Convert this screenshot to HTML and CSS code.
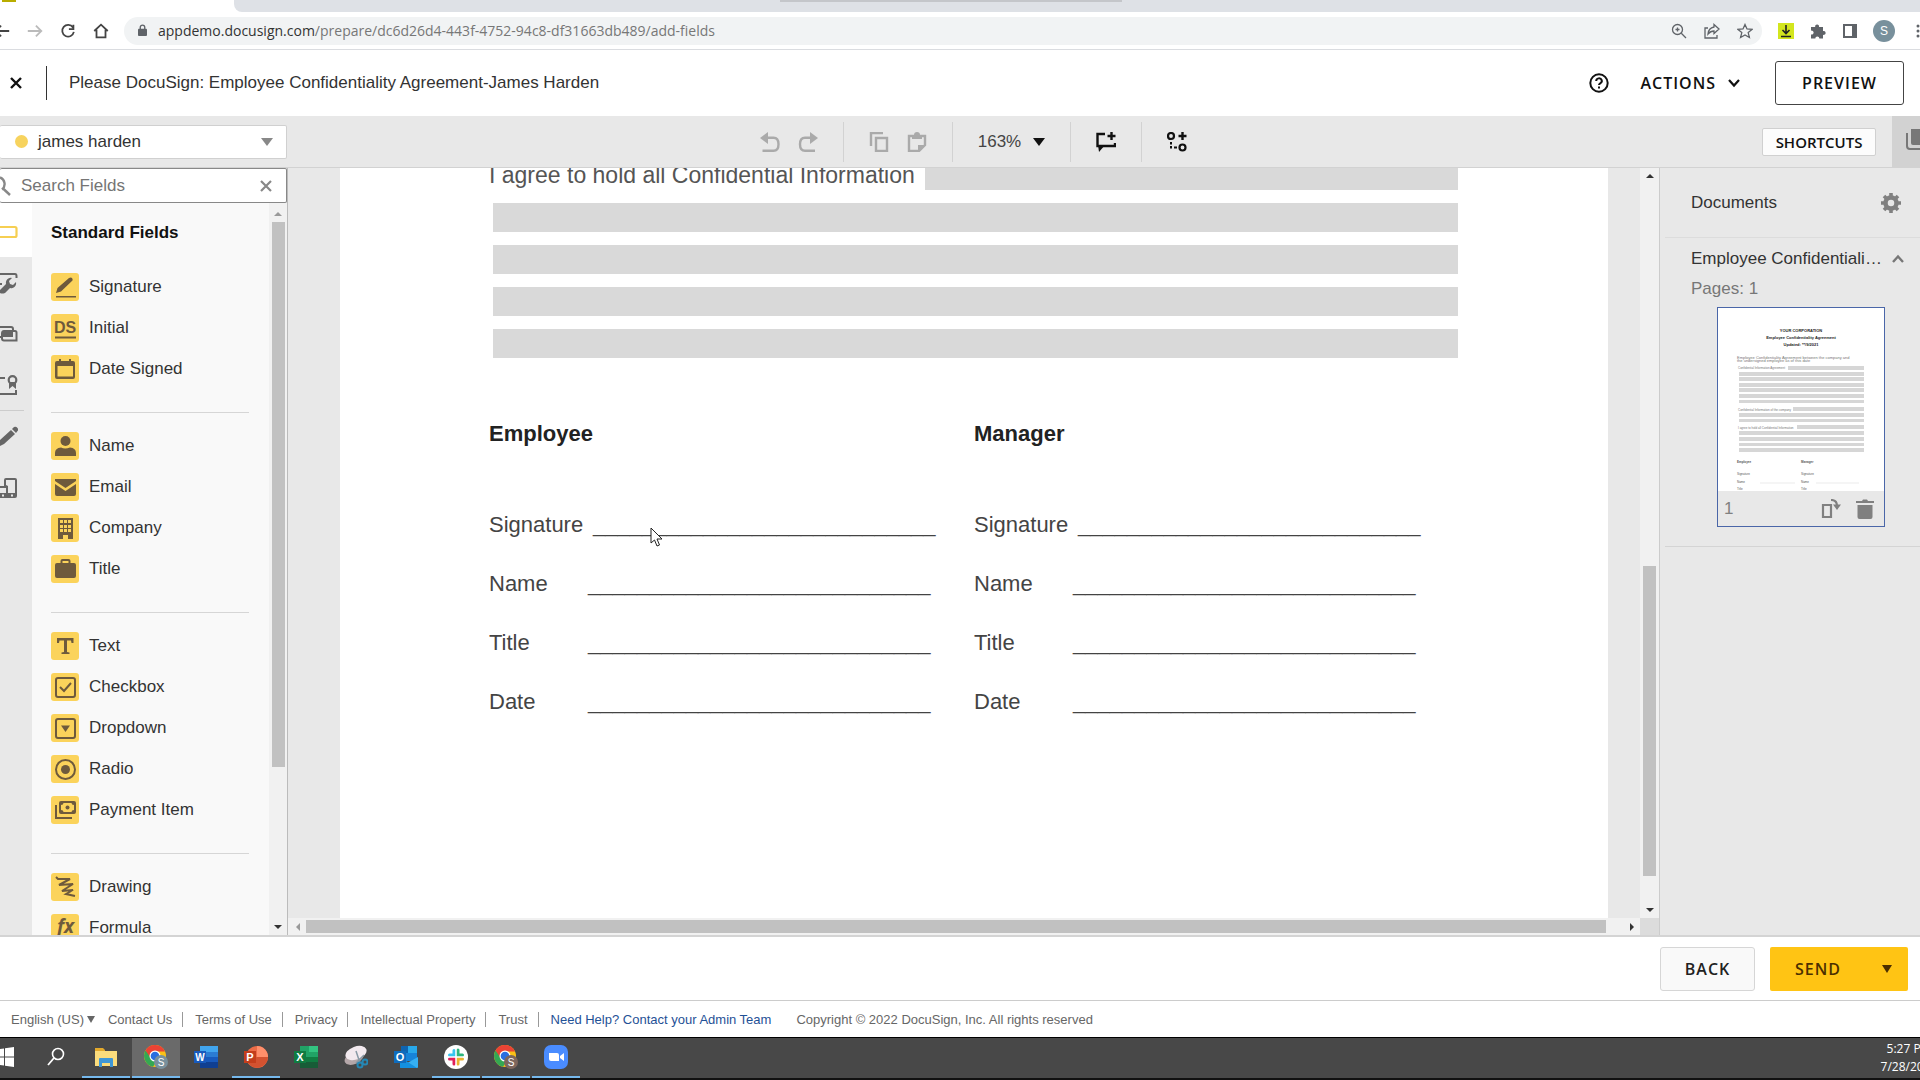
FILE: index.html
```html
<!DOCTYPE html>
<html lang="en">
<head>
  <meta charset="UTF-8">
  <title>Add Fields</title>
  <link rel="stylesheet" href="styles.css">
</head>
<body>
  <!-- browser -->
  <div class="tabs"><div class="tab"><span class="favicon"></span></div><div class="tab-rest"><span class="share-bar"></span></div></div>
  <div class="browser">
    <div class="nav">
      <button aria-label="Back"><svg class="i20" viewBox="0 0 20 20"><path d="M18 10H3M9 4l-6 6 6 6" class="ln"/></svg></button>
      <button aria-label="Forward" class="dim"><svg class="i20" viewBox="0 0 20 20"><path d="M2 10h14M11 4l6 6-6 6" class="ln"/></svg></button>
      <button aria-label="Reload"><svg class="i20" viewBox="0 0 20 20"><path d="M15.5 6A6.500 6.500 0 1 0 16.500 11M16 3v5h-5" class="ln"/></svg></button>
      <button aria-label="Home"><svg class="i20" viewBox="0 0 20 20"><path d="M2.500 10L10 3l7.500 7M5 8.500V17h10V8.500" class="ln"/></svg></button>
    </div>
    <div class="address">
      <svg class="lock" viewBox="0 0 10 14"><path d="M1 5h8q1 0 1 1v6q0 1-1 1H1q-1 0-1-1V6q0-1 1-1z"/><path d="M2.500 6V3.500a2.500 2.500 0 0 1 5 0V6" fill="none" stroke="currentColor" stroke-width="1.500"/></svg>
      <span class="url"><b>appdemo.docusign.com</b>/prepare/dc6d26d4-443f-4752-94c8-df31663db489/add-fields</span>
      <svg class="i16" viewBox="0 0 16 16"><circle cx="6.500" cy="6.500" r="5" class="th"/><path d="M10.300 10.300L15 15M4.500 6.500h4M6.500 4.500v4" class="th"/></svg>
      <svg class="i16" viewBox="0 0 16 16"><path d="M4 5H1v10h12v-3" class="th"/><path d="M10 1.500L15 6l-5 4.500V8Q6.500 8 4 11q.5-6 6-7z" class="th"/></svg>
      <svg class="i16" viewBox="0 0 16 16"><path d="M8 1.500l2 4.500 5 .4-3.800 3.200 1.200 4.900L8 11.900l-4.400 2.600 1.200-4.900L1 6.400 6 6z" class="th"/></svg>
    </div>
    <div class="ext">
      <svg class="i16" viewBox="0 0 16 16"><path fill="#d3e61e" d="M0 0h16v16H0z"/><path d="M8 2v8M4.500 7L8 10.500 11.500 7M3 13.500h10" stroke="#222" stroke-width="1.600" fill="none"/></svg>
      <svg class="i16" viewBox="0 0 16 16"><path d="M1 4h4.200a2 2 0 1 1 3.800 0H13v4a2 2 0 1 1 0 3.800V15.500H9.300a2 2 0 1 0-4 0H1v-4a2 2 0 1 0 0-3.800z"/></svg>
      <svg class="i16" viewBox="0 0 16 16"><path d="M1 1h14v14H1zM3 3v10h7V3z" fill-rule="evenodd"/></svg>
      <span class="avatar">S</span>
      <svg class="i16" viewBox="0 0 16 16"><circle cx="8" cy="3" r="1.500"/><circle cx="8" cy="8" r="1.500"/><circle cx="8" cy="13" r="1.500"/></svg>
    </div>
  </div>

  <header class="header">
    <button class="close" aria-label="Close"><svg class="i12" viewBox="0 0 12 12"><path d="M1 1l10 10M11 1L1 11" stroke="currentColor" stroke-width="2.400"/></svg></button>
    <h1>Please DocuSign: Employee Confidentiality Agreement-James Harden</h1>
    <button class="help" aria-label="Help"><svg class="i20" viewBox="0 0 20 20"><circle cx="10" cy="10" r="8.700" fill="none" stroke="currentColor" stroke-width="2"/><path d="M7.200 8a2.800 2.600 0 1 1 4 2.300Q10 11 10 12" fill="none" stroke="currentColor" stroke-width="2"/><path d="M9 13.500h2v2H9z"/></svg></button>
    <button class="actions">ACTIONS <svg class="i12" viewBox="0 0 12 12"><path d="M1 3l5 5.500L11 3" fill="none" stroke="currentColor" stroke-width="2.200"/></svg></button>
    <button class="btn preview">PREVIEW</button>
  </header>

  <div class="toolbar">
    <button class="recipient"><span class="dot"></span>james harden<span class="caret"></span></button>
    <div class="tools">
      <div class="group dim">
        <button aria-label="Undo"><svg class="i20" viewBox="0 0 20 20"><path d="M0 6l8-6v12z"/><path d="M7 6h7q5 0 5 6.500T14 19H3" transform="translate(-.5 -.3)" fill="none" stroke="currentColor" stroke-width="2.400"/></svg></button>
        <button aria-label="Redo"><svg class="i20" viewBox="0 0 20 20"><path d="M20 6l-8-6v12z"/><path d="M13 6H7q-5 0-5 6.500T7 19h10" transform="translate(0 -.3)" fill="none" stroke="currentColor" stroke-width="2.400"/></svg></button>
      </div>
      <div class="group dim">
        <button aria-label="Copy"><svg class="i20" viewBox="0 0 20 20"><path d="M2 14V1h12M7 6h11v13H7z" fill="none" stroke="currentColor" stroke-width="2.400"/></svg></button>
        <button aria-label="Paste"><svg class="i20" viewBox="0 0 20 20"><path d="M2 4h16v9l-6 6H2z" fill="none" stroke="currentColor" stroke-width="2.400"/><path d="M5 3h2a3 3 0 0 1 6 0h2v4H5zM11 20v-7h8z"/></svg></button>
      </div>
      <div class="group"><button class="zoom">163% <span class="caret"></span></button></div>
      <div class="group"><button aria-label="Add comment"><svg class="i20" viewBox="0 0 20 20"><path d="M9 2H1.500v12H19v-3M15.500 0v8M11.500 4h8" fill="none" stroke="currentColor" stroke-width="2.400"/><path d="M2 13h7l-6 7z"/></svg></button></div>
      <div class="group"><button aria-label="Conditional rules"><svg class="i20" viewBox="0 0 20 20"><circle cx="4" cy="4" r="3" fill="none" stroke="currentColor" stroke-width="2.200"/><circle cx="15.500" cy="15.500" r="3" fill="none" stroke="currentColor" stroke-width="2.200"/><path d="M15.500 0v8M11.500 4h8" stroke="currentColor" stroke-width="2.400"/><path d="M3 10h2v2.500H3zM3 14h2v2.500H3zM7 14.500h3v2H7z"/></svg></button></div>
    </div>
    <button class="shortcuts">SHORTCUTS</button>
    <button class="pages-tab" aria-label="Pages"><svg viewBox="0 0 14 22"><path d="M5 0h9v16H7q-2 0-2-2z"/><path d="M1 4v13q0 3 3 3h10" fill="none" stroke="currentColor" stroke-width="2"/></svg></button>
  </div>

  <main class="work">
    <aside class="sidebar">
      <div class="search">
        <svg class="glass" viewBox="0 0 12 22"><path d="M0 2.500a7 7 0 0 1 2 12M2.500 13L10 20" fill="none" stroke="currentColor" stroke-width="2.400"/></svg>
        <input type="text" placeholder="Search Fields" aria-label="Search Fields">
        <button aria-label="Clear"><svg class="i12" viewBox="0 0 12 12"><path d="M1 1l10 10M11 1L1 11" stroke="currentColor" stroke-width="2.200"/></svg></button>
      </div>
      <div class="sidebody">
        <nav class="rail">
          <button class="on" aria-label="Standard fields"><svg viewBox="0 0 18 22"><path d="M0 6h15q1.500 0 1.500 1.500v7Q16.500 16 15 16H0" fill="none" stroke="#f6cf52" stroke-width="2.200"/></svg></button>
          <button aria-label="Custom fields"><svg viewBox="0 0 18 22"><path d="M0 2h15q1.500 0 1.500 2v2M0 12h2" fill="none" stroke="currentColor" stroke-width="2"/><path d="M0 18l6-6a5 5 0 0 1 6-6l-3 3 1 3 3 1 3-3a5 5 0 0 1-6 6l-5 5q-3 1-5 0z"/></svg></button>
          <button aria-label="Prefill"><svg viewBox="0 0 18 22"><path d="M0 4h11q2 0 2 2v2M0 14h3" fill="none" stroke="currentColor" stroke-width="2"/><path d="M4 8h11q1.500 0 1.500 1.500v8H4q-2 0-2-2v-5Q2 8 4 8z" fill="none" stroke="currentColor" stroke-width="2"/><path d="M3 9h10v5H3z"/></svg></button>
          <button aria-label="Seals"><svg viewBox="0 0 18 22"><path d="M0 4h5M0 20h16v-4" fill="none" stroke="currentColor" stroke-width="2"/><circle cx="12.500" cy="6" r="3.800" fill="none" stroke="currentColor" stroke-width="2.200"/><path d="M9 8h7v7l-3.500-3L9 15z"/></svg></button>
          <hr>
          <button aria-label="Merge fields"><svg viewBox="0 0 18 22"><path d="M0 14L11 4l4 4L4 18l-4 2zM12 3l2-2q2-1 3.500 1t0 3L16 7z"/></svg></button>
          <button aria-label="Devices"><svg viewBox="0 0 18 22"><path fill-rule="evenodd" d="M6 1h9q2 0 2 2v16q0 2-2 2H0V9h4V3q0-2 2-2zM6 3v5l2 1v7h7V3zM0 11v5h6v-5zM11 17.500v2h2v-2zM2 17.500v2h2v-2z"/></svg></button>
        </nav>
        <div class="fields">
          <h2>Standard Fields</h2>
          <ul>
            <li><svg viewBox="0 0 28 28"><path d="M5 20l1.500-5L18 5q2-1 3 0t.5 2.500L10 18.500zM5 23h20v1.500H5z"/></svg>Signature</li>
            <li><svg viewBox="0 0 28 28"><text x="3" y="19" font-size="16" font-weight="bold">DS</text><path d="M4 22.500h21v2H4z"/></svg>Initial</li>
            <li><svg viewBox="0 0 28 28"><path fill-rule="evenodd" d="M7 6h1V4h2v2h8V4h2v2h2q2 0 2 2v14q0 2-2 2H6q-2 0-2-2V8q0-2 2-2zM6.500 11v10.500h15.500V11z"/></svg>Date Signed</li>
          </ul>
          <hr>
          <ul>
            <li><svg viewBox="0 0 28 28"><circle cx="14.500" cy="9" r="5"/><path d="M4 24v-3q0-5 6-5.500 4 2 9 0 6 .5 6 5.500v3z"/></svg>Name</li>
            <li><svg viewBox="0 0 28 28"><path d="M4 6h21v2l-10.500 7L4 8zM4 11l10.500 7L25 11v10q0 2-2 2H6q-2 0-2-2z"/></svg>Email</li>
            <li><svg viewBox="0 0 28 28"><path fill-rule="evenodd" d="M7 4h15v21h-5v-4h-5v4H7zM9 6v3h3V6zM13 6v3h3V6zM17 6v3h3V6zM9 11v3h3v-3zM13 11v3h3v-3zM17 11v3h3v-3zM9 15v3h3v-3zM13 15v3h3v-3zM17 15v3h3v-3z"/></svg>Company</li>
            <li><svg viewBox="0 0 28 28"><path fill-rule="evenodd" d="M9.500 8V6q0-2 2-2h6q2 0 2 2v2H23q2 0 2 2v11q0 2-2 2H6q-2 0-2-2V10q0-2 2-2zM11.500 8h6V6h-6z"/></svg>Title</li>
          </ul>
          <hr>
          <ul>
            <li><svg viewBox="0 0 28 28"><path d="M6 6h16.500v5h-2L20 8.500h-4V20l2.500.5V22h-8v-1.500L13 20V8.500H8.500L8 11H6z"/></svg>Text</li>
            <li><svg viewBox="0 0 28 28"><rect x="5" y="5" width="19" height="19" rx="2" class="box"/><path d="M9 14l4 4 7-8" class="box"/></svg>Checkbox</li>
            <li><svg viewBox="0 0 28 28"><rect x="5" y="5" width="19" height="19" rx="2" class="box"/><path d="M10 11.500h9L14.500 18z"/></svg>Dropdown</li>
            <li><svg viewBox="0 0 28 28"><circle cx="14.500" cy="14.500" r="9.500" class="box"/><circle cx="14.500" cy="14.500" r="4.500"/></svg>Radio</li>
            <li><svg viewBox="0 0 28 28"><path fill-rule="evenodd" d="M10 5h13q2 0 2 2v9q0 2-2 2H10q-2 0-2-2V7q0-2 2-2zM12.500 7q0 2-2.500 2v5q2.500 0 2.500 2h8q0-2 2.500-2V9q-2.500 0-2.500-2z"/><circle cx="16.500" cy="11.500" r="2"/><path d="M5 9v13h16" class="box"/></svg>Payment Item</li>
          </ul>
          <hr>
          <ul>
            <li><svg viewBox="0 0 28 28"><path d="M5 4l2 2h12L8 12l14-1-11 7 11-1-7 4 9 2" class="box"/></svg>Drawing</li>
            <li><svg viewBox="0 0 28 28"><text x="6" y="19" font-size="19" font-style="italic" font-weight="bold" font-family="Open Sans, sans-serif">fx</text></svg>Formula</li>
          </ul>
        </div>
        <div class="vscroll side-scroll"><span class="arrow up"></span><span class="thumb"></span><span class="arrow down"></span></div>
      </div>
    </aside>

    <section class="canvas">
      <div class="canvas-main">
        <article class="page">
          <div class="line-first"><p>I agree to hold all Confidential Information</p><span></span></div>
          <div class="redact"></div>
          <div class="redact"></div>
          <div class="redact"></div>
          <div class="redact"></div>
          <div class="sign">
            <h3>Employee</h3><h3>Manager</h3>
            <p class="wide"><i>Signature</i><span>____________________________</span></p><p class="wide"><i>Signature</i><span>____________________________</span></p>
            <p><i>Name</i><span>____________________________</span></p><p><i>Name</i><span>____________________________</span></p>
            <p><i>Title</i><span>____________________________</span></p><p><i>Title</i><span>____________________________</span></p>
            <p><i>Date</i><span>____________________________</span></p><p><i>Date</i><span>____________________________</span></p>
          </div>
          <svg class="cursor" viewBox="0 0 13 20"><path d="M1 1v15l3.500-3 2.500 6 2.500-1-2.500-6h5z" fill="#fff" stroke="#222"/></svg>
        </article>
        <div class="vscroll"><span class="arrow up"></span><span class="thumb"></span><span class="arrow down"></span></div>
      </div>
      <div class="hscroll"><span class="arrow left"></span><span class="thumb"></span><span class="arrow right"></span><span class="corner"></span></div>
    </section>

    <aside class="docs">
      <div class="docs-head"><h2>Documents</h2>
        <button aria-label="Settings"><svg class="i20" viewBox="0 0 20 20"><circle cx="10" cy="10" r="5.500" fill="none" stroke="currentColor" stroke-width="4.500"/><path d="M10 0v4M10 16v4M0 10h4M16 10h4M3 3l3 3M14 14l3 3M17 3l-3 3M6 14l-3 3" stroke="currentColor" stroke-width="3.600"/></svg></button>
      </div>
      <div class="doc">
        <button class="doc-name"><span>Employee Confidentiality Agreement</span><svg class="i12" viewBox="0 0 12 12"><path d="M1 9l5-5.500L11 9" fill="none" stroke="currentColor" stroke-width="2.400"/></svg></button>
        <p>Pages: 1</p>
        <div class="thumb-card">
          <svg class="mini" viewBox="0 0 166 183">
            <g text-anchor="middle" font-weight="bold" font-size="4" fill="#222"><text x="83" y="24">YOUR CORPORATION</text><text x="83" y="31">Employee Confidentiality Agreement</text><text x="83" y="38">Updated: **/9/2021</text></g>
            <g font-size="4" fill="#777"><text x="19" y="51">Employee Confidentiality Agreement between the company and</text><text x="19" y="54">the undersigned employee as of this date</text></g>
            <g font-size="3" fill="#777"><text x="20" y="61">Confidential Information Agreement</text><text x="20" y="103">Confidential Information of the company</text><text x="20" y="121">I agree to hold all Confidential Information</text></g>
            <path fill="#d6d6d6" d="M70 58h76v4H70zM21 64h125v4H21zM21 69h125v4H21zM21 75h125v4H21zM21 80h125v4H21zM21 86h125v4H21zM21 92h125v3H21zM75 99h71v4H75zM21 105h125v4H21zM21 111h125v3H21zM79 117h67v4H79zM21 123h125v4H21zM21 129h125v4H21zM21 135h125v3H21zM21 140h125v4H21z"/>
            <g font-size="3" fill="#555"><g font-weight="bold"><text x="19" y="155">Employee</text><text x="83" y="155">Manager</text></g><text x="19" y="167">Signature</text><text x="83" y="167">Signature</text><text x="19" y="175">Name</text><text x="83" y="175">Name</text><text x="19" y="182">Title</text><text x="83" y="182">Title</text></g>
            <path d="M42 175h35M98 175h43" stroke="#ddd" stroke-width=".6"/>
          </svg>
          <div class="thumb-bar">1
            <button aria-label="Rotate"><svg class="i20" viewBox="0 0 20 20"><path d="M2 6h8v12H2z" fill="none" stroke="currentColor" stroke-width="2.200"/><path d="M10 1q6 0 6 6" fill="none" stroke="currentColor" stroke-width="2.200"/><path d="M12 5.500h8L16 11z"/></svg></button>
            <button aria-label="Delete"><svg class="i20" viewBox="0 0 20 20"><path d="M1 2h6l1-1.500h4L13 2h6v2H1zM2.500 6h15v12q0 2-2 2h-11q-2 0-2-2z"/></svg></button>
          </div>
        </div>
      </div>
    </aside>
  </main>

  <div class="bottom">
    <button class="btn back">BACK</button>
    <div class="send"><button>SEND</button><button aria-label="More send options"><span class="caret"></span></button></div>
  </div>

  <footer class="footer">
    <button>English (US) <span class="caret"></span></button>
    <ul>
      <li><a href="#">Contact Us</a></li>
      <li><a href="#">Terms of Use</a></li>
      <li><a href="#">Privacy</a></li>
      <li><a href="#">Intellectual Property</a></li>
      <li><a href="#">Trust</a></li>
      <li><a href="#" class="blue">Need Help? Contact your Admin Team</a></li>
    </ul>
    <span>Copyright © 2022 DocuSign, Inc. All rights reserved</span>
  </footer>

  <div class="taskbar">
    <button class="start" aria-label="Start"><svg viewBox="0 0 14 20"><path fill="#fff" d="M0 2l4-.5v8H0zM5 1.300L14 0v9.500H5zM0 10.500h4v8L0 18zM5 10.500h9V20l-9-1.300z"/></svg></button>
    <button aria-label="Search"><svg viewBox="0 0 24 24"><circle cx="14" cy="9" r="5.500" fill="none" stroke="#fff" stroke-width="1.600"/><path d="M10 13l-6 7" stroke="#fff" stroke-width="1.800"/></svg></button>
    <button class="open" aria-label="Files"><svg viewBox="0 0 24 24"><path fill="#e3a92c" d="M1 3h8l2 2v4H1z"/><path fill="#fbdc7c" d="M1 6h22v15H1z"/><path fill="#3f97d6" d="M5 22v-8q0-1 1-1h12q1 0 1 1v8h-3v-4H8v4z"/></svg></button>
    <button class="open current" aria-label="Chrome"><svg viewBox="0 0 24 24"><circle cx="11" cy="11" r="11" fill="#fbc116"/><path fill="#34a853" d="M11 11L1.500 5.500a11 11 0 0 0 7.500 16.300L13 16z"/><path fill="#ea4335" d="M1.500 5.500a11 11 0 0 1 19.500 1H11l-4 7z"/><circle cx="11" cy="11" r="5.500" fill="#fff"/><circle cx="11" cy="11" r="4.300" fill="#2a6fe0"/><circle cx="17" cy="17" r="7" fill="#78909c"/><text x="17" y="20.500" font-size="10" fill="#fff" text-anchor="middle">S</text></svg></button>
    <button aria-label="Word"><svg viewBox="0 0 24 24"><path fill="#41a5ee" d="M6 1h18v6H6z"/><path fill="#2b7cd3" d="M6 7h18v5H6z"/><path fill="#185abd" d="M6 12h18v5H6z"/><path fill="#103f91" d="M6 17h18v6H6z"/><path fill="#185abd" d="M0 6h12v12H0z"/><text x="6" y="16" font-size="10" font-weight="bold" fill="#fff" text-anchor="middle">W</text></svg></button>
    <button class="open" aria-label="PowerPoint"><svg viewBox="0 0 24 24"><circle cx="13" cy="12" r="11" fill="#ed6c47"/><path fill="#ff8f6b" d="M13 1a11 11 0 0 1 11 11H13z"/><path fill="#d35230" d="M2.500 15a11 11 0 0 0 21.500-3H13z"/><path fill="#c43e1c" d="M0 6h12v12H0z"/><text x="6" y="16" font-size="11" font-weight="bold" fill="#fff" text-anchor="middle">P</text></svg></button>
    <button aria-label="Excel"><svg viewBox="0 0 24 24"><path fill="#21a366" d="M6 1h9v11H6z"/><path fill="#33c481" d="M15 1h9v6h-9z"/><path fill="#21a366" d="M15 7h9v5h-9z"/><path fill="#107c41" d="M6 12h18v5H6z"/><path fill="#185c37" d="M6 17h18v6H6z"/><path fill="#107c41" d="M0 6h12v12H0z"/><text x="6" y="16" font-size="11" font-weight="bold" fill="#fff" text-anchor="middle">X</text></svg></button>
    <button aria-label="Snip"><svg viewBox="0 0 24 24"><ellipse cx="10" cy="13" rx="10" ry="6" fill="#b5a7a9" transform="rotate(-25 10 13)"/><ellipse cx="12" cy="8" rx="11" ry="6.500" fill="#f2e9ee" transform="rotate(-20 12 8)"/><path d="M12 6l4 12M20 10l-8 8" stroke="#8899a5" stroke-width="1.500"/><circle cx="16" cy="20" r="2.500" fill="none" stroke="#2588b5" stroke-width="2"/><circle cx="21" cy="17" r="2.500" fill="none" stroke="#2588b5" stroke-width="2"/></svg></button>
    <button aria-label="Outlook"><svg viewBox="0 0 24 24"><path fill="#0f64b0" d="M7 1h8v11H7z"/><path fill="#28a8ea" d="M14 1h9v7h-9z"/><path fill="#1784d9" d="M7 8h16v8H7z"/><path fill="#36b0f3" d="M6 22l18-10v10q0 1-1 1H7z"/><path fill="#1490df" d="M6 12l17 11H7q-1 0-1-1z"/><path fill="#0f6cbd" d="M0 6h12v12H0z"/><text x="6" y="16" font-size="11" font-weight="bold" fill="#fff" text-anchor="middle">O</text></svg></button>
    <button class="open" aria-label="Slack"><svg viewBox="0 0 24 24"><circle cx="12" cy="12" r="12" fill="#fff"/><g fill="none" stroke-width="3" stroke-linecap="round"><path stroke="#36c5f0" d="M10 5.500v4.500H5.500"/><path stroke="#2eb67d" d="M14 5v5h4.500"/><path stroke="#ecb22e" d="M18.500 14H14v5"/><path stroke="#e01e5a" d="M5.500 14H10v5"/></g><path stroke="#fff" d="M12 3v18M3 12h18"/></svg></button>
    <button class="open" aria-label="Chrome"><svg viewBox="0 0 24 24"><circle cx="11" cy="11" r="11" fill="#fbc116"/><path fill="#34a853" d="M11 11L1.500 5.500a11 11 0 0 0 7.500 16.300L13 16z"/><path fill="#ea4335" d="M1.500 5.500a11 11 0 0 1 19.500 1H11l-4 7z"/><circle cx="11" cy="11" r="5.500" fill="#fff"/><circle cx="11" cy="11" r="4.300" fill="#2a6fe0"/><circle cx="17" cy="17" r="7" fill="#7d665c"/><text x="17" y="20.500" font-size="10" fill="#fff" text-anchor="middle">S</text></svg></button>
    <button class="open" aria-label="Zoom"><svg viewBox="0 0 24 24"><rect width="24" height="24" rx="7" fill="#4a8cff"/><path fill="#fff" d="M5 8h8q2 0 2 2v6H7q-2 0-2-2zM16 11l4-3v8l-4-3z"/></svg></button>
    <div class="clock"><span>5:27 PM</span><span>7/28/2022</span></div>
  </div>
</body>
</html>
```
FILE: styles.css
```css
* {
  box-sizing: border-box;
}
body {
  margin: 0;
  height: 100vh;
  display: flex;
  flex-direction: column;
  overflow: hidden;
  font-family: "Liberation Sans", Arial, sans-serif;
  font-size: 17px;
  color: #333;
  background: #fff;
}
button {
  font: inherit;
  color: inherit;
  background: none;
  border: none;
  padding: 0;
  cursor: pointer;
  display: flex;
  align-items: center;
}
svg {
  fill: currentColor;
  display: block;
  flex: none;
}
h1, h2, h3, p, ul {
  margin: 0;
  padding: 0;
  font-size: inherit;
  font-weight: normal;
  list-style: none;
}
.i20 {
  width: 20px;
  height: 20px;
}
.i16 {
  width: 16px;
  height: 16px;
}
.i12 {
  width: 12px;
  height: 12px;
}
.ln {
  fill: none;
  stroke: currentColor;
  stroke-width: 2;
}
.th {
  fill: none;
  stroke: currentColor;
  stroke-width: 1.3;
}
.caret {
  border: 6px solid transparent;
  border-top: 8px solid currentColor;
  border-bottom: none;
}

/* browser */
.tabs {
  height: 12px;
  display: flex;
  background: #fff;
}
.tab {
  width: 234px;
}
.favicon {
  display: block;
  width: 14px;
  height: 2px;
  margin-left: 2px;
  background: #b9ad00;
}
.tab-rest {
  flex: 1;
  background: #dee1e6;
  border-bottom-left-radius: 8px;
}
.share-bar {
  display: block;
  width: 342px;
  height: 2px;
  margin: 0 auto;
  transform: translateX(-126px);
  background: #c4c6ca;
}
.browser {
  height: 38px;
  display: flex;
  align-items: center;
  border-bottom: 1px solid #dadce0;
  color: #5f6368;
}
.nav {
  display: flex;
  gap: 12px;
  margin-left: -7px;
  color: #444;
}
.nav button {
  width: 21px;
}
.nav .dim {
  color: #bbb;
}
.nav .i20 {
  width: 18px;
  height: 18px;
}
.address {
  flex: 1;
  height: 28px;
  margin-left: 11px;
  padding: 0 9px 0 14px;
  display: flex;
  align-items: center;
  gap: 17px;
  background: #f1f3f4;
  border-radius: 14px;
}
.lock {
  width: 9px;
  height: 13px;
  margin-right: -6px;
}
.url {
  flex: 1;
  font-family: "Open Sans", sans-serif;
  font-size: 14px;
  color: #777;
}
.url b {
  font-weight: normal;
  color: #333;
}
.ext {
  display: flex;
  align-items: center;
  gap: 16px;
  margin-left: 16px;
  margin-right: -6px;
}
.avatar {
  width: 22px;
  height: 22px;
  margin: 0 -1px;
  border-radius: 50%;
  background: #78909c;
  color: #fff;
  font-size: 12px;
  line-height: 22px;
  text-align: center;
}

/* header */
.header {
  height: 66px;
  display: flex;
  align-items: center;
  padding: 0 16px 0 10px;
}
.close {
  color: #111;
}
h1 {
  flex: 1;
  margin-left: 24px;
  padding-left: 22px;
  line-height: 34px;
  border-left: 1px solid #333;
}
.help, .actions, .preview {
  color: #111;
}
.actions, .btn, .send button {
  font-family: "Open Sans", sans-serif;
  font-weight: 600;
  font-size: 16px;
  letter-spacing: 1px;
}
.actions {
  gap: 12px;
  margin: 0 35px 0 31px;
}
.btn {
  height: 44px;
  justify-content: center;
  border: 1px solid #444;
  border-radius: 3px;
}
.preview {
  width: 129px;
}

/* toolbar */
.toolbar {
  height: 52px;
  display: flex;
  align-items: center;
  background: #e8e8e8;
  border-bottom: 1px solid #d2d2d2;
}
.recipient {
  width: 287px;
  height: 34px;
  padding: 0 13px 0 15px;
  background: #fff;
  border: 1px solid #d0d0d0;
  border-left: none;
  border-radius: 2px;
}
.recipient .dot {
  width: 13px;
  height: 13px;
  margin-right: 10px;
  border-radius: 50%;
  background: #f7d35e;
}
.recipient .caret {
  margin-left: auto;
  color: #888;
}
.tools {
  flex: 1;
  display: flex;
  justify-content: center;
  padding-right: 102px;
}
.group {
  height: 40px;
  display: flex;
  align-items: center;
  gap: 18px;
  padding: 0 25px;
  color: #111;
  border-right: 1px solid #d2d2d2;
}
.group:last-child {
  border: none;
}
.group.dim {
  color: #aaa;
}
.zoom {
  color: #444;
  gap: 12px;
}
.zoom .caret {
  color: #111;
}
.shortcuts {
  width: 114px;
  height: 28px;
  justify-content: center;
  margin-right: 16px;
  background: #fcfcfc;
  border: 1px solid #d0d0d0;
  border-radius: 2px;
  color: #111;
  font-family: "Open Sans", sans-serif;
  font-weight: 600;
  font-size: 15px;
}
.pages-tab {
  width: 28px;
  height: 52px;
  padding: 0 0 4px 14px;
  background: #d2d2d2;
  color: #777;
}
.pages-tab svg {
  width: 14px;
  height: 22px;
}

/* work area */
.work {
  flex: 1;
  min-height: 0;
  display: flex;
  background: #e8e8e8;
  border-bottom: 2px solid #d4d4d4;
}
.sidebar {
  width: 288px;
  display: flex;
  flex-direction: column;
  border-right: 1px solid #bbb;
}
.search {
  height: 35px;
  display: flex;
  align-items: center;
  padding-right: 14px;
  background: #fff;
  border: 1px solid #888;
  border-left: none;
  border-radius: 2px;
  color: #888;
}
.glass {
  width: 12px;
  height: 22px;
}
.search input {
  flex: 1;
  min-width: 0;
  padding: 0 0 0 9px;
  border: none;
  outline: none;
  font: inherit;
  color: #333;
}
.search input::placeholder {
  color: #757575;
}
.sidebody {
  flex: 1;
  min-height: 0;
  display: flex;
  background: #f9f9f9;
}
.rail {
  width: 32px;
  background: #e8e8e8;
  color: #666;
}
.rail button {
  width: 32px;
  height: 51px;
}
.rail .on {
  height: 54px;
  padding-top: 4px;
  background: #fff;
}
.rail svg {
  width: 18px;
  height: 22px;
}
.rail hr {
  width: 24px;
  margin: 0;
  border: none;
  border-top: 1px solid #ccc;
}
.fields {
  flex: 1;
  overflow: hidden;
  padding: 19px 20px 0 19px;
}
.fields h2 {
  margin-bottom: 29px;
  line-height: 22px;
  font-weight: bold;
  color: #111;
}
.fields ul {
  display: flex;
  flex-direction: column;
  gap: 13px;
}
.fields li {
  display: flex;
  align-items: center;
  gap: 10px;
  line-height: 28px;
}
.fields li svg {
  width: 28px;
  height: 28px;
  border-radius: 3px;
  background: #fbd35b;
  fill: #6e5a3c;
}
.fields .box {
  fill: none;
  stroke: #6e5a3c;
  stroke-width: 2;
}
.fields hr {
  margin: 29px 0 19px;
  border: none;
  border-top: 1px solid #d6d6d6;
}
.vscroll {
  width: 19px;
  display: flex;
  flex-direction: column;
  align-items: center;
  padding: 6px 0;
  background: #f1f1f1;
}
.side-scroll {
  width: 18px;
  padding-top: 9px;
}
.vscroll .thumb {
  width: 13px;
  background: #c1c1c1;
}
.side-scroll .thumb {
  height: 76%;
  margin-top: 6px;
}
.arrow {
  border: 4px solid transparent;
  color: #333;
}
.arrow.up {
  border-top: none;
  border-bottom-color: currentColor;
}
.side-scroll .up {
  color: #999;
}
.arrow.down {
  margin-top: auto;
  border-bottom: none;
  border-top-color: currentColor;
}
.arrow.left {
  border-left: none;
  border-right-color: #999;
}
.arrow.right {
  margin-left: auto;
  border-right: none;
  border-left-color: currentColor;
}

/* document */
.canvas {
  flex: 1;
  display: flex;
  flex-direction: column;
  border-right: 1px solid #ccc;
}
.canvas-main {
  flex: 1;
  min-height: 0;
  display: flex;
}
.page {
  position: relative;
  flex: 1;
  margin: 0 32px 0 52px;
  padding: 0 150px 0 149px;
  overflow: hidden;
  background: #fff;
  font-size: 22px;
}
.canvas .vscroll .thumb {
  height: 310px;
  margin-top: auto;
}
.canvas .vscroll .down {
  margin-top: 32px;
}
.line-first {
  height: 22px;
  display: flex;
  gap: 10px;
  font-size: 23px;
  color: #555;
}
.line-first p {
  line-height: 14px;
}
.line-first span {
  flex: 1;
  background: #d9d9d9;
}
.redact {
  height: 29px;
  margin: 13px 0 0 4px;
  background: #d9d9d9;
}
.sign {
  display: grid;
  grid-template-columns: 485px 1fr;
  margin-top: 62px;
}
.sign h3 {
  line-height: 28px;
  margin-bottom: 47px;
  font-weight: bold;
  color: #222;
}
.sign p {
  line-height: 59px;
  white-space: nowrap;
  color: #444;
}
.sign i {
  display: inline-block;
  width: 99px;
  font-style: normal;
}
.sign .wide i {
  width: 104px;
}
.cursor {
  position: absolute;
  left: 310px;
  top: 359px;
  width: 13px;
  height: 20px;
}
.hscroll {
  height: 17px;
  display: flex;
  align-items: center;
  padding-left: 8px;
  background: #f1f1f1;
}
.hscroll .thumb {
  width: 1300px;
  flex: 0 1 auto;
  height: 13px;
  margin-left: 6px;
  background: #c1c1c1;
}
.hscroll .corner {
  width: 19px;
  height: 17px;
  margin-left: 6px;
  background: #dcdcdc;
}

/* documents panel */
.docs {
  width: 260px;
}
.docs-head {
  height: 70px;
  display: flex;
  align-items: center;
  justify-content: space-between;
  margin-left: 5px;
  padding: 0 19px 0 26px;
  border-bottom: 1px solid #dcdcdc;
}
.docs-head button, .thumb-bar {
  color: #808080;
}
.doc {
  margin-left: 5px;
  padding: 9px 16px 19px 26px;
  border-bottom: 1px solid #d4d4d4;
}
.doc-name {
  width: 100%;
  gap: 10px;
  line-height: 24px;
}
.doc-name span {
  flex: 1;
  text-align: left;
  overflow: hidden;
  white-space: nowrap;
  text-overflow: ellipsis;
}
.doc-name svg {
  color: #777;
}
.doc p {
  line-height: 36px;
  color: #777;
}
.thumb-card {
  width: 168px;
  margin-left: 26px;
  background: #fff;
  border: 1px solid #4a66a8;
}
.mini {
  width: 166px;
  height: 183px;
}
.thumb-bar {
  height: 35px;
  display: flex;
  align-items: center;
  gap: 14px;
  padding: 0 9px 0 6px;
  background: #e8e8e8;
}
.thumb-bar button:first-of-type {
  margin-left: auto;
}

/* bottom */
.bottom {
  height: 64px;
  display: flex;
  align-items: center;
  justify-content: flex-end;
  gap: 15px;
  padding: 0 12px;
  border-bottom: 1px solid #ccc;
}
.back {
  width: 95px;
  background: #f9f9f9;
  border-color: #d6d6d6;
  color: #222;
}
.send {
  display: flex;
  height: 44px;
  background: #ffc414;
  border-radius: 2px;
  color: #4c2f00;
}
.send button {
  justify-content: center;
  width: 96px;
}
.send button + button {
  width: 42px;
}
.send .caret {
  border-width: 8px 5px 0;
}
.footer {
  height: 36px;
  display: flex;
  align-items: center;
  padding-left: 11px;
  font-size: 13px;
  color: #666;
}
.footer .caret {
  margin-left: 3px;
  border-width: 7px 4px 0;
}
.footer ul {
  display: flex;
  margin: 0 25px 0 13px;
}
.footer li + li {
  margin-left: 10px;
  padding-left: 12px;
  border-left: 1px solid #999;
}
.footer a {
  color: #666;
  text-decoration: none;
}
.footer .blue {
  color: #1f5196;
}

/* taskbar */
.taskbar {
  height: 43px;
  display: flex;
  border-top: 1px solid #000;
  border-bottom: 2px solid #111;
  background: #484848;
  color: #fff;
}
.taskbar button {
  width: 48px;
  margin-right: 2px;
  justify-content: center;
  border-bottom: 2px solid transparent;
}
.taskbar svg {
  width: 24px;
  height: 24px;
}
.taskbar .start {
  width: 30px;
  justify-content: flex-start;
}
.start svg {
  width: 14px;
  height: 20px;
}
.taskbar .open {
  border-bottom-color: #76b9ed;
}
.taskbar .current {
  background: #6a6a6a;
}
.clock {
  width: 58px;
  margin-left: auto;
  margin-right: -18px;
  display: flex;
  flex-direction: column;
  align-items: center;
  justify-content: center;
  font-family: "Open Sans", sans-serif;
  font-size: 12px;
  line-height: 18px;
  white-space: nowrap;
}
```
